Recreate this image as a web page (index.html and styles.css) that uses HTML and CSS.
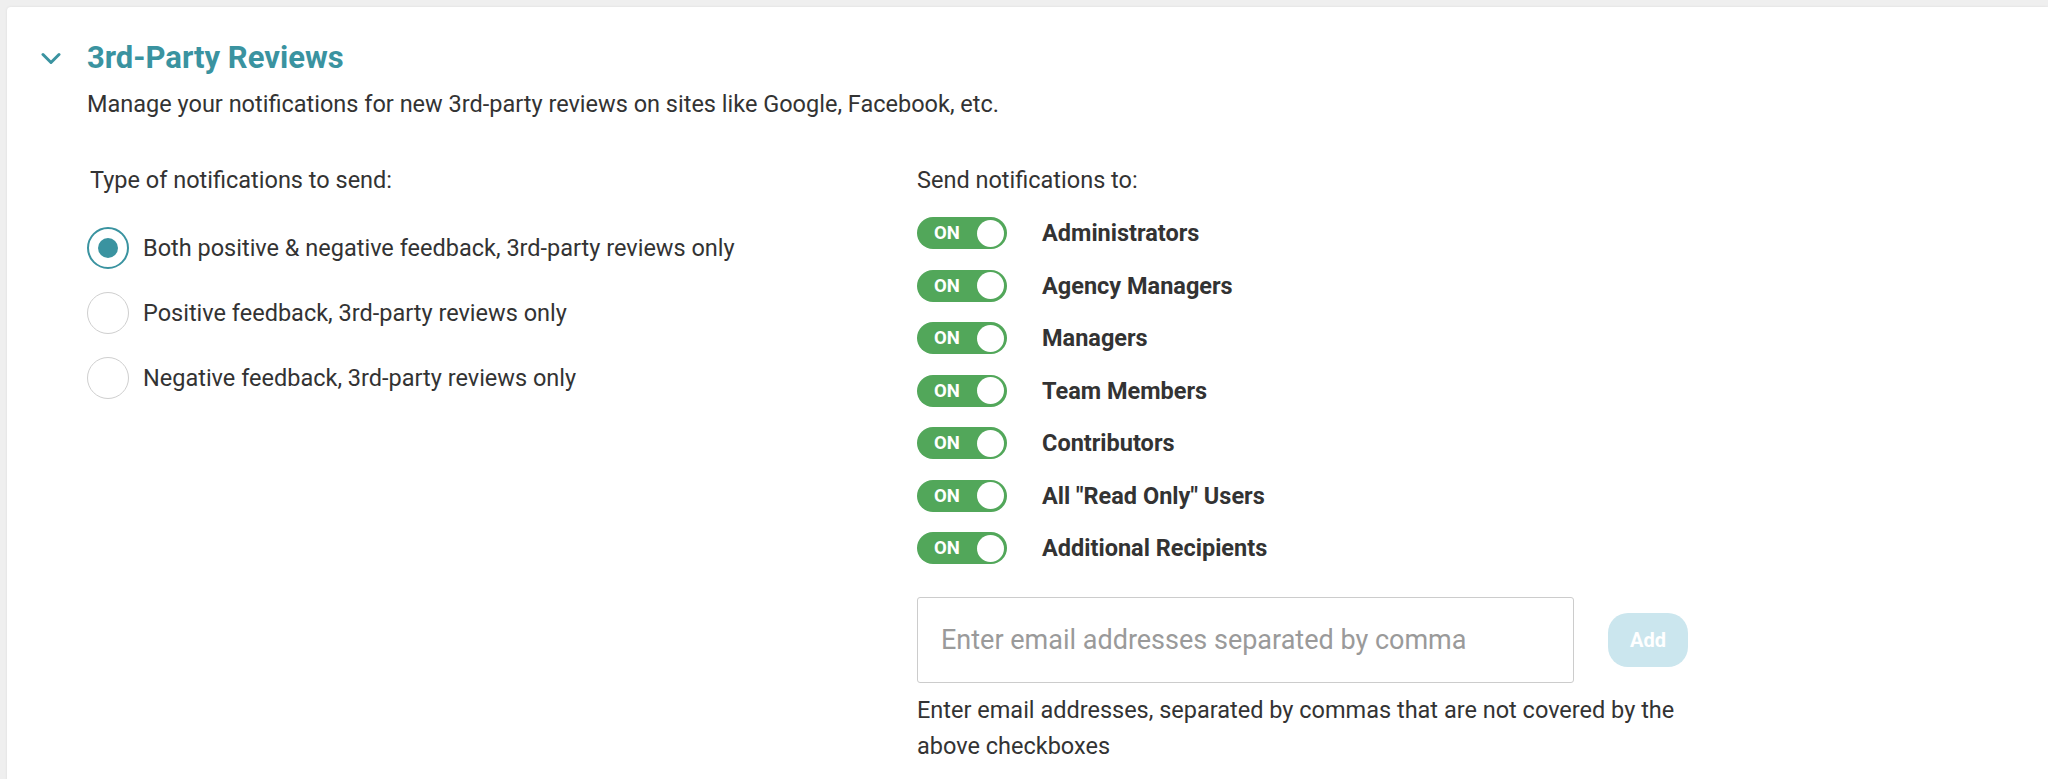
FILE: index.html
```html
<!DOCTYPE html>
<html lang="en">
<head>
<meta charset="utf-8">
<title>3rd-Party Reviews</title>
<link rel="stylesheet" href="styles.css">
</head>
<body>
<div class="card">
  <div class="header">
    <svg class="chevron" viewBox="0 0 20 13" width="20" height="13"><path d="M2 2.5 L10 10.5 L18 2.5" fill="none" stroke="#3a93a0" stroke-width="3" stroke-linecap="round" stroke-linejoin="round"/></svg>
    <h2 class="title">3rd-Party Reviews</h2>
  </div>
  <p class="desc">Manage your notifications for new 3rd-party reviews on sites like Google, Facebook, etc.</p>
  <div class="columns">
    <div class="col-left">
      <div class="col-label">Type of notifications to send:</div>
      <div class="radios">
        <label class="radio-row"><span class="radio checked"><span class="dot"></span></span><span class="radio-text">Both positive &amp; negative feedback, 3rd-party reviews only</span></label>
        <label class="radio-row"><span class="radio"></span><span class="radio-text">Positive feedback, 3rd-party reviews only</span></label>
        <label class="radio-row"><span class="radio"></span><span class="radio-text">Negative feedback, 3rd-party reviews only</span></label>
      </div>
    </div>
    <div class="col-right">
      <div class="col-label">Send notifications to:</div>
      <div class="toggles">
        <div class="toggle-row"><span class="toggle"><span class="on">ON</span><span class="knob"></span></span><span class="toggle-label">Administrators</span></div>
        <div class="toggle-row"><span class="toggle"><span class="on">ON</span><span class="knob"></span></span><span class="toggle-label">Agency Managers</span></div>
        <div class="toggle-row"><span class="toggle"><span class="on">ON</span><span class="knob"></span></span><span class="toggle-label">Managers</span></div>
        <div class="toggle-row"><span class="toggle"><span class="on">ON</span><span class="knob"></span></span><span class="toggle-label">Team Members</span></div>
        <div class="toggle-row"><span class="toggle"><span class="on">ON</span><span class="knob"></span></span><span class="toggle-label">Contributors</span></div>
        <div class="toggle-row"><span class="toggle"><span class="on">ON</span><span class="knob"></span></span><span class="toggle-label">All "Read Only" Users</span></div>
        <div class="toggle-row"><span class="toggle"><span class="on">ON</span><span class="knob"></span></span><span class="toggle-label">Additional Recipients</span></div>
      </div>
      <div class="email-row">
        <div class="email-input"><span class="placeholder">Enter email addresses separated by comma</span></div>
        <button class="add-btn" type="button">Add</button>
      </div>
      <p class="helper">Enter email addresses, separated by commas that are not covered by the<br>above checkboxes</p>
    </div>
  </div>
</div>
</body>
</html>
```

FILE: styles.css
```css
html, body {
  margin: 0;
  padding: 0;
  background: #efefef;
  height: 100%;
  overflow: hidden;
}
body {
  font-family: Roboto, "Liberation Sans", sans-serif;
  color: #333333;
}
.card {
  margin: 7px 0 0 7px;
  background: #ffffff;
  border-top-left-radius: 4px;
  box-shadow: 0 0 3px rgba(0,0,0,0.08);
  height: 900px;
  padding: 31px 0 0 34px;
  box-sizing: border-box;
}
.header {
  display: flex;
  align-items: center;
  height: 40px;
}
.chevron {
  display: block;
  margin-right: 26px;
}
.title {
  margin: 0;
  font-size: 31px;
  font-weight: 700;
  color: #3a93a0;
  line-height: 40px;
}
.desc {
  margin: 11px 0 0 46px;
  font-size: 23.5px;
  line-height: 30px;
}
.columns {
  display: flex;
  margin: 46px 0 0 46px;
}
.col-left {
  width: 830px;
  flex: none;
}
.col-label {
  font-size: 23.5px;
  line-height: 30px;
}
.col-left .col-label {
  padding-left: 3px;
}
.radios {
  display: flex;
  flex-direction: column;
  gap: 23px;
  margin-top: 32px;
}
.radio-row {
  display: flex;
  align-items: center;
  height: 42px;
}
.radio {
  width: 42px;
  height: 42px;
  box-sizing: border-box;
  border-radius: 50%;
  border: 1.5px solid #cfcfcf;
  display: flex;
  align-items: center;
  justify-content: center;
  flex: none;
}
.radio.checked {
  border: 2px solid #3a93a0;
}
.dot {
  width: 20px;
  height: 20px;
  border-radius: 50%;
  background: #3a93a0;
}
.radio-text {
  margin-left: 14px;
  font-size: 23.5px;
}
.toggles {
  display: flex;
  flex-direction: column;
  gap: 20.5px;
  margin-top: 22px;
}
.toggle-row {
  display: flex;
  align-items: center;
  height: 32px;
}
.toggle {
  width: 90px;
  height: 32px;
  border-radius: 16px;
  background: #52a75a;
  display: flex;
  align-items: center;
  justify-content: space-between;
  padding: 0 3px 0 17px;
  box-sizing: border-box;
  flex: none;
}
.on {
  color: #ffffff;
  font-weight: 700;
  font-size: 18.5px;
}
.knob {
  width: 27px;
  height: 27px;
  border-radius: 50%;
  background: #ffffff;
}
.toggle-label {
  margin-left: 35px;
  font-size: 23.5px;
  font-weight: 700;
}
.email-row {
  display: flex;
  align-items: center;
  margin-top: 33px;
}
.email-input {
  width: 657px;
  height: 86px;
  box-sizing: border-box;
  border: 1.5px solid #cccccc;
  border-radius: 3px;
  display: flex;
  align-items: center;
  padding: 0 20px 0 23px;
  white-space: nowrap;
}
.placeholder {
  color: #9a9a9a;
  font-size: 27px;
}
.add-btn {
  margin-left: 34px;
  width: 80px;
  height: 54px;
  border: none;
  border-radius: 20px;
  background: #cbe6ee;
  color: #ffffff;
  font-family: Roboto, "Liberation Sans", sans-serif;
  font-weight: 700;
  font-size: 20px;
  padding: 0;
}
.helper {
  margin: 9px 0 0 0;
  font-size: 23.5px;
  line-height: 36px;
}
```
